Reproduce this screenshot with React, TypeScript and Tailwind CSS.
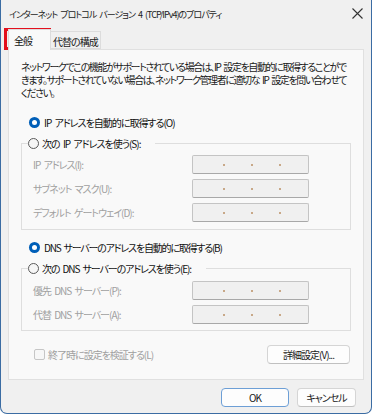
import React from "react";

const font = "font-['Noto_Sans_CJK_JP','Noto_Sans',sans-serif] [font-feature-settings:'palt']";

function Radio({ checked }: { checked?: boolean }) {
  if (checked) {
    return (
      <span className="w-[11px] h-[11px] rounded-full bg-[#005fb8] flex items-center justify-center shrink-0">
        <span className="w-[5px] h-[5px] rounded-full bg-white" />
      </span>
    );
  }
  return <span className="w-[11px] h-[11px] rounded-full border border-[#5a5a5a] bg-[#f6f6f6] shrink-0" />;
}

function IpBox() {
  return (
    <div className="w-[117px] h-[19px] border border-[#c4c4c4] border-b-[#a8a8a8] rounded-[2px] bg-[#f0f0f0] flex items-center pl-[30px] gap-[26px]">
      <span className="w-[2px] h-[2px] bg-[#c8a888]" />
      <span className="w-[2px] h-[2px] bg-[#c8a888]" />
      <span className="w-[2px] h-[2px] bg-[#c8a888]" />
    </div>
  );
}

function Row({ label }: { label: string }) {
  return (
    <div className="flex items-center h-[19px] pl-[11px] pr-[41px]">
      <span className="text-[#a0a0a0] flex-1">{label}</span>
      <IpBox />
    </div>
  );
}

export default function App() {
  return (
    <div className={`relative w-[372px] h-[414px] bg-[#f0f0f0] border-x border-b border-[#3b6ca3] rounded-b-[7px] overflow-hidden flex flex-col text-[10px] leading-[13px] tracking-[-1px] [word-spacing:2px] text-[#111] ${font}`}>
      {/* title bar */}
      <div className="h-[28px] flex items-center justify-between pl-[8px] pr-[8px]">
        <span className="text-[9px] tracking-[-1px] text-[#1c1c1c] whitespace-nowrap">インターネット プロトコル バージョン 4 (TCP/IPv4)のプロパティ</span>
        <svg width="11" height="11" viewBox="0 0 11 11" className="mt-[-2px]">
          <path d="M0.5 0.5L10.5 10.5M10.5 0.5L0.5 10.5" stroke="#333" strokeWidth="1.1" />
        </svg>
      </div>

      {/* tabs */}
      <div className="flex items-end h-[21px] pl-[7px]">
        <div className="w-[43px] h-[21px] bg-[#f9f9f9] border-x border-t border-[#dcdcdc] pl-[5px] pt-[4px] relative z-10 mb-[-1px]">全般</div>
        <div className="w-[50px] h-[18px] bg-[#f0f0f0] border-y border-r border-[#dcdcdc] pl-[2px] pt-[3px] text-[#222] whitespace-nowrap">代替の構成</div>
      </div>

      {/* panel */}
      <div className="mx-[7px] h-[331px] bg-[#f9f9f9] border border-[#e0e0e0] flex flex-col px-[12px]">
        <p className="mt-[10px] text-[#1a1a1a] whitespace-nowrap tracking-[-1.4px]">
          ネットワークでこの機能がサポートされている場合は、IP 設定を自動的に取得することがで
          <br />
          きます。サポートされていない場合は、ネットワーク管理者に適切な IP 設定を問い合わせて
          <br />
          ください。
        </p>

        <div className="mt-[15px] h-[16px] flex items-center gap-[4px] pl-[8px]">
          <Radio checked />
          <span>IP アドレスを自動的に取得する(O)</span>
        </div>

        <fieldset className="mt-[5px] border border-[#dedede] pt-[4px] pb-[7px] flex flex-col gap-[5px]">
          <legend className="ml-[6px] pr-[15px] h-[16px] flex items-center gap-[3px]">
            <Radio />
            <span>次の IP アドレスを使う(S):</span>
          </legend>
          <Row label="IP アドレス(I):" />
          <Row label="サブネット マスク(U):" />
          <Row label="デフォルト ゲートウェイ(D):" />
        </fieldset>

        <div className="mt-[9px] h-[16px] flex items-center gap-[4px] pl-[8px]">
          <Radio checked />
          <span className="tracking-[-1.2px]">DNS サーバーのアドレスを自動的に取得する(B)</span>
        </div>

        <fieldset className="mt-[5px] border border-[#dedede] pt-[5px] pb-[6px] flex flex-col gap-[5px]">
          <legend className="ml-[6px] pr-[15px] h-[16px] flex items-center gap-[3px]">
            <Radio />
            <span className="tracking-[-1.1px]">次の DNS サーバーのアドレスを使う(E):</span>
          </legend>
          <Row label="優先 DNS サーバー(P):" />
          <Row label="代替 DNS サーバー(A):" />
        </fieldset>

        <div className="mt-[14px] flex items-center justify-between pl-[13px] pr-[1px]">
          <div className="flex items-center gap-[3px] text-[#a0a0a0]">
            <span className="w-[11px] h-[11px] border border-[#c6c6c6] rounded-[2px] bg-[#f7f7f7]" />
            <span>終了時に設定を検証する(L)</span>
          </div>
          <button className="w-[83px] h-[19px] bg-[#fdfdfd] border border-[#d5d5d5] border-b-[#c0c0c0] rounded-[4px] text-[#1a1a1a]">
            詳細設定(V)...
          </button>
        </div>
      </div>

      {/* footer */}
      <div className="flex justify-end gap-[8px] pr-[15px] mt-[8px]">
        <button className="w-[68px] h-[19px] bg-[#fdfdfd] border border-[#6d9fd6] rounded-[4px] text-[#1a1a1a]">OK</button>
        <button className="w-[59px] h-[19px] bg-[#fdfdfd] border border-[#d5d5d5] border-b-[#c0c0c0] rounded-[4px] text-[#1a1a1a]">キャンセル</button>
      </div>

      {/* red highlight box on tab */}
      <div className="absolute left-[3px] top-[28px] w-[47px] h-[22px] border-[3px] border-[#e3101d] pointer-events-none" />
    </div>
  );
}
